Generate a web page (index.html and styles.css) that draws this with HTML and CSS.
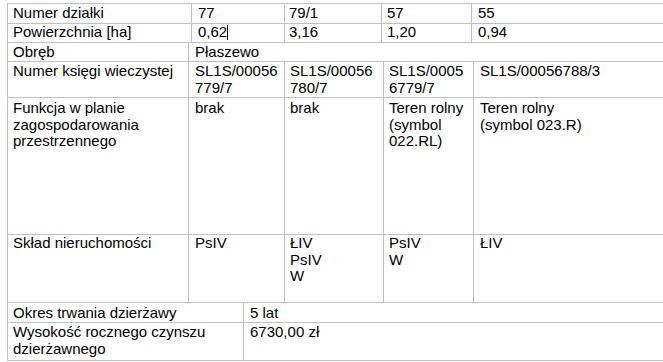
FILE: index.html
```html
<!DOCTYPE html>
<html lang="pl">
<head>
<meta charset="utf-8">
<title>Działki</title>
<link rel="stylesheet" href="styles.css">
</head>
<body>
<table class="grid t1">
  <colgroup>
    <col class="w184"><col class="w93"><col class="w97"><col class="w90"><col class="w191">
  </colgroup>
  <tr class="r1">
    <td class="pl5">Numer działki</td>
    <td class="pl6">77</td>
    <td class="pl4">79/1</td>
    <td class="pl5">57</td>
    <td class="pl6 last">55</td>
  </tr>
  <tr class="r2">
    <td class="pl5">Powierzchnia [ha]</td>
    <td class="pl6">0,62<span class="caret"></span></td>
    <td class="pl4">3,16</td>
    <td class="pl5">1,20</td>
    <td class="pl6 last">0,94</td>
  </tr>
</table>
<table class="grid t2">
  <colgroup>
    <col class="w181"><col class="w96"><col class="w99"><col class="w90"><col class="w189">
  </colgroup>
  <tr class="r3">
    <td class="pl5">Obręb</td>
    <td class="pl6 last" colspan="4">Płaszewo</td>
  </tr>
  <tr class="r4">
    <td class="pl5">Numer księgi wieczystej</td>
    <td class="pl6 brk">SL1S/00056779/7</td>
    <td class="pl5 brk">SL1S/00056780/7</td>
    <td class="pl5 brk">SL1S/00056779/7</td>
    <td class="pl6 brk last">SL1S/00056788/3</td>
  </tr>
  <tr class="r5">
    <td class="pl5">Funkcja w planie zagospodarowania przestrzennego</td>
    <td class="pl6">brak</td>
    <td class="pl5">brak</td>
    <td class="pl5">Teren rolny (symbol 022.RL)</td>
    <td class="pl6 last">Teren rolny<br>(symbol 023.R)</td>
  </tr>
  <tr class="r6">
    <td class="pl5">Skład nieruchomości</td>
    <td class="pl6">PsIV</td>
    <td class="pl5">ŁIV<br>PsIV<br>W</td>
    <td class="pl5">PsIV<br>W</td>
    <td class="pl6 last">ŁIV</td>
  </tr>
</table>
<table class="grid t3">
  <colgroup>
    <col class="w236"><col class="w419">
  </colgroup>
  <tr class="r7">
    <td class="pl5">Okres trwania dzierżawy</td>
    <td class="pl6 last">5 lat</td>
  </tr>
  <tr class="r8">
    <td class="pl5">Wysokość rocznego czynszu dzierżawnego</td>
    <td class="pl6 last">6730,00 zł</td>
  </tr>
</table>
</body>
</html>
```

FILE: styles.css
```css
html, body {
  margin: 0;
  background: #ffffff;
}
body {
  padding: 3px 0 0 7px;
  font-family: "Liberation Sans", Arial, sans-serif;
  font-size: 15px;
  line-height: 16.5px;
  color: #000000;
  overflow: hidden;
  width: 656px;
  height: 359px;
}
.grid {
  border-collapse: separate;
  border-spacing: 0;
  table-layout: fixed;
  width: 656px;
  border-left: 1px solid #c0c0c0;
}
.t1 {
  border-top: 1px solid #c0c0c0;
}
.grid td {
  box-sizing: border-box;
  border-right: 1px solid #c0c0c0;
  border-bottom: 1px solid #c0c0c0;
  vertical-align: top;
  padding: 0 5px 0 5px;
  white-space: normal;
}
.grid td.last {
  border-right: none;
}
.w184 { width: 184px; }
.w93 { width: 93px; }
.w97 { width: 97px; }
.w90 { width: 90px; }
.w191 { width: 191px; }
.w181 { width: 181px; }
.w96 { width: 96px; }
.w99 { width: 99px; }
.w189 { width: 189px; }
.w236 { width: 236px; }
.w419 { width: 419px; }

.grid td.pl4 { padding-left: 4px; }
.grid td.pl5 { padding-left: 5px; }
.grid td.pl6 { padding-left: 6px; }
.brk { overflow-wrap: anywhere; }

.r1 { height: 20px; }
.r2 { height: 19px; }
.r3 { height: 19px; }
.r4 { height: 36px; }
.r5 { height: 137px; }
.r6 { height: 68px; }
.r7 { height: 20px; }
.r8 { height: 38px; }

.r1 td { padding-top: 1px; }
.r3 td { padding-top: 1px; }
.r4 td { padding-top: 1px; }
.r5 td { padding-top: 2px; }
.r7 td { padding-top: 2px; }
.r8 td { padding-top: 1px; }

.caret {
  display: inline-block;
  width: 1px;
  height: 15px;
  background: #000000;
  vertical-align: -3px;
}
```
